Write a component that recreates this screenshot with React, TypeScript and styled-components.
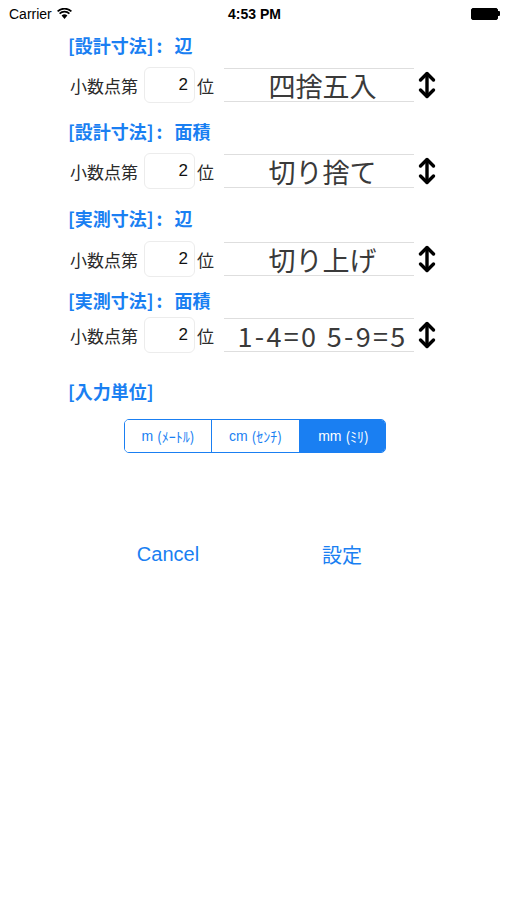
import React from "react"
import styled, { createGlobalStyle } from "styled-components"

const GlobalStyle = createGlobalStyle`
  html, body {
    margin: 0;
    padding: 0;
    background: #ffffff;
  }
  body {
    font-family: "Liberation Sans", "Noto Sans CJK JP", sans-serif;
  }
`

const Blue = "#1a7ff2"
const Jp = `"Noto Sans CJK JP", "Liberation Sans", sans-serif`

const Screen = styled.div`
  width: 507px;
  height: 900px;
  background: #fff;
  display: flex;
  flex-direction: column;
`

const StatusBar = styled.div`
  height: 27px;
  display: grid;
  grid-template-columns: 1fr auto 1fr;
  align-items: center;
  padding: 0 7px 0 9px;
  font-size: 14px;
  color: #000;
`

const Carrier = styled.div`
  display: flex;
  align-items: center;
  gap: 5px;
`

const Clock = styled.div`
  font-weight: 700;
  font-size: 14px;
`

const Battery = styled.div`
  justify-self: end;
  display: flex;
  align-items: center;
`

const BatteryBody = styled.div`
  width: 25px;
  height: 10px;
  background: #000;
  border: 1px solid #000;
  border-radius: 2px;
`

const BatteryNub = styled.div`
  width: 2px;
  height: 5px;
  background: #000;
  border-radius: 0 1px 1px 0;
`

const Content = styled.div`
  display: flex;
  flex-direction: column;
  padding-left: 68px;
`

const Section = styled.section<{ $top: number }>`
  display: flex;
  flex-direction: column;
  margin-top: ${(p) => p.$top}px;
`

const Heading = styled.h2<{ $top?: number }>`
  margin: ${(p) => p.$top ?? 0}px 0 0;
  height: 24px;
  line-height: 24px;
  font-family: ${Jp};
  font-size: 18px;
  font-weight: 700;
  color: ${Blue};
  white-space: nowrap;
`

const Colon = styled.span`
  display: inline-block;
  width: 21px;
  padding-left: 3px;
  box-sizing: border-box;
`

const Row = styled.div<{ $gap: number }>`
  display: flex;
  align-items: center;
  height: 36px;
  margin-top: ${(p) => p.$gap}px;
  padding-left: 2px;
`

const Label = styled.span`
  font-family: ${Jp};
  font-size: 17px;
  color: #2a2a2a;
  width: 72px;
  white-space: nowrap;
`

const DigitBox = styled.div`
  box-sizing: border-box;
  width: 51px;
  height: 36px;
  margin-left: 2px;
  border: 1px solid #ececec;
  border-radius: 6px;
  display: flex;
  align-items: center;
  justify-content: flex-end;
  padding-right: 6px;
  font-size: 17px;
  color: #111;
`

const Unit = styled.span`
  font-family: ${Jp};
  font-size: 17px;
  color: #2a2a2a;
  margin-left: 2px;
  width: 17px;
`

const Picker = styled.div<{ $spread?: boolean }>`
  box-sizing: border-box;
  width: 190px;
  height: 34px;
  margin-left: 10px;
  padding-left: 7px;
  border-top: 1px solid #dedede;
  border-bottom: 1px solid #dedede;
  display: flex;
  align-items: center;
  justify-content: center;
  font-family: ${Jp};
  font-size: 27px;
  line-height: 1;
  letter-spacing: ${(p) => (p.$spread ? "2.3px" : "0")};
  color: #3a3a3a;
  white-space: nowrap;
`

const ArrowIcon = styled.svg`
  width: 20px;
  height: 30px;
  margin-left: 3px;
  flex: none;
`

const Segmented = styled.div`
  display: grid;
  grid-template-columns: 86px 88px 88px;
  margin: 16px 0 0 56px;
  width: 262px;
  height: 34px;
  box-sizing: border-box;
  border: 1px solid ${Blue};
  border-radius: 5px;
  overflow: hidden;
`

const Segment = styled.div<{ $active?: boolean }>`
  display: flex;
  align-items: center;
  justify-content: center;
  font-size: 14px;
  color: ${(p) => (p.$active ? "#fff" : Blue)};
  background: ${(p) => (p.$active ? Blue : "#fff")};
  & + & {
    border-left: 1px solid ${Blue};
  }
`

const Kana = styled.span`
  font-family: ${Jp};
  font-size: 14px;
`

const Actions = styled.div`
  display: grid;
  grid-template-columns: 174px 174px;
  margin: 86px 0 0 13px;
`

const ActionButton = styled.button<{ $jp?: boolean }>`
  border: none;
  background: none;
  padding: 0;
  height: 30px;
  color: ${Blue};
  font-family: ${(p) => (p.$jp ? Jp : `"Liberation Sans", sans-serif`)};
  font-size: 20px;
`

function UpDownArrow() {
  return (
    <ArrowIcon viewBox="0 0 20 30" fill="none" stroke="#000" strokeWidth={3.4} strokeLinecap="round" strokeLinejoin="round">
      <path d="M10 4 V26" />
      <path d="M3.5 10 L10 3.5 L16.5 10" />
      <path d="M3.5 20 L10 26.5 L16.5 20" />
    </ArrowIcon>
  )
}

function WifiIcon() {
  return (
    <svg width="15" height="11" viewBox="0 0 15 11">
      <path d="M7.5 11 L4.6 7.6 A4.3 4.3 0 0 1 10.4 7.6 Z" fill="#000" />
      <path d="M2.6 5.6 A7 7 0 0 1 12.4 5.6" stroke="#000" strokeWidth="1.7" fill="none" />
      <path d="M0.6 3.4 A10 10 0 0 1 14.4 3.4" stroke="#000" strokeWidth="1.7" fill="none" />
    </svg>
  )
}

const sections = [
  { kind: "[設計寸法]", part: "辺", value: "四捨五入", top: 6, gap: 10 },
  { kind: "[設計寸法]", part: "面積", value: "切り捨て", top: 16, gap: 10 },
  { kind: "[実測寸法]", part: "辺", value: "切り上げ", top: 17, gap: 11 },
  { kind: "[実測寸法]", part: "面積", value: "1-4=0 5-9=5", top: 11, gap: 5, spread: true },
]

export default function App() {
  return (
    <Screen>
      <GlobalStyle />
      <StatusBar>
        <Carrier>
          Carrier <WifiIcon />
        </Carrier>
        <Clock>4:53 PM</Clock>
        <Battery>
          <BatteryBody />
          <BatteryNub />
        </Battery>
      </StatusBar>
      <Content>
        {sections.map((s) => (
          <Section key={s.kind + s.part} $top={s.top}>
            <Heading>
              {s.kind}
              <Colon>:</Colon>
              {s.part}
            </Heading>
            <Row $gap={s.gap}>
              <Label>小数点第</Label>
              <DigitBox>2</DigitBox>
              <Unit>位</Unit>
              <Picker $spread={s.spread}>{s.value}</Picker>
              <UpDownArrow />
            </Row>
          </Section>
        ))}
        <Heading $top={26}>[入力単位]</Heading>
        <Segmented>
          <Segment>
            m&nbsp;<Kana>(ﾒｰﾄﾙ)</Kana>
          </Segment>
          <Segment>
            cm&nbsp;<Kana>(ｾﾝﾁ)</Kana>
          </Segment>
          <Segment $active>
            mm&nbsp;<Kana>(ﾐﾘ)</Kana>
          </Segment>
        </Segmented>
        <Actions>
          <ActionButton>Cancel</ActionButton>
          <ActionButton $jp>設定</ActionButton>
        </Actions>
      </Content>
    </Screen>
  )
}
